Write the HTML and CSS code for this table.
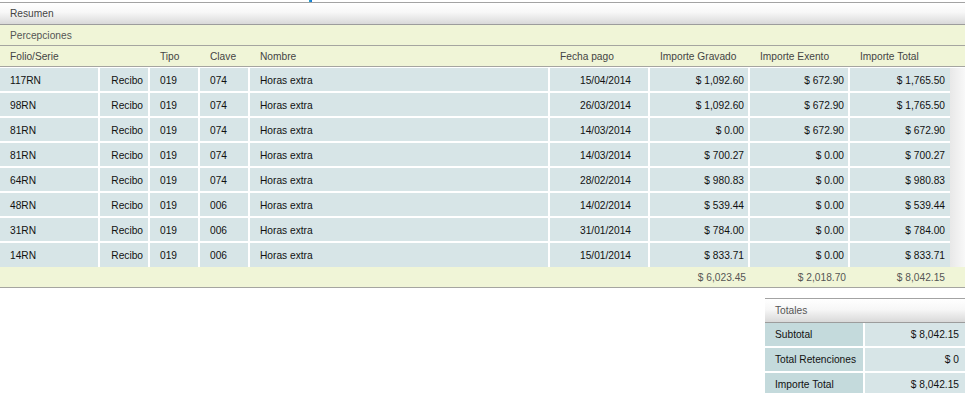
FILE: index.html
```html
<!DOCTYPE html>
<html lang="es">
<head>
<meta charset="utf-8">
<title>Resumen</title>
<link rel="stylesheet" href="styles.css">
</head>
<body>
<div class="topbar"><span class="mark"></span></div>
<div class="panel">
  <div class="panel-head">Resumen</div>
  <div class="section-head">Percepciones</div>
  <table class="grid">
    <colgroup>
      <col class="w100"><col class="w50"><col class="w50"><col class="w50"><col class="w300">
      <col class="w100"><col class="w100"><col class="w100"><col class="w100"><col class="w15">
    </colgroup>
    <thead>
      <tr>
        <th>Folio/Serie</th><th></th><th>Tipo</th><th>Clave</th><th>Nombre</th>
        <th>Fecha pago</th><th>Importe Gravado</th><th>Importe Exento</th><th>Importe Total</th><th></th>
      </tr>
    </thead>
    <tbody>
      <tr><td class="l">117RN</td><td class="rc">Recibo</td><td class="l">019</td><td class="l">074</td><td class="l">Horas extra</td><td class="d">15/04/2014</td><td class="m">$ 1,092.60</td><td class="m">$ 672.90</td><td class="t">$ 1,765.50</td><td class="gutter"></td></tr>
      <tr><td class="l">98RN</td><td class="rc">Recibo</td><td class="l">019</td><td class="l">074</td><td class="l">Horas extra</td><td class="d">26/03/2014</td><td class="m">$ 1,092.60</td><td class="m">$ 672.90</td><td class="t">$ 1,765.50</td><td class="gutter"></td></tr>
      <tr><td class="l">81RN</td><td class="rc">Recibo</td><td class="l">019</td><td class="l">074</td><td class="l">Horas extra</td><td class="d">14/03/2014</td><td class="m">$ 0.00</td><td class="m">$ 672.90</td><td class="t">$ 672.90</td><td class="gutter"></td></tr>
      <tr><td class="l">81RN</td><td class="rc">Recibo</td><td class="l">019</td><td class="l">074</td><td class="l">Horas extra</td><td class="d">14/03/2014</td><td class="m">$ 700.27</td><td class="m">$ 0.00</td><td class="t">$ 700.27</td><td class="gutter"></td></tr>
      <tr><td class="l">64RN</td><td class="rc">Recibo</td><td class="l">019</td><td class="l">074</td><td class="l">Horas extra</td><td class="d">28/02/2014</td><td class="m">$ 980.83</td><td class="m">$ 0.00</td><td class="t">$ 980.83</td><td class="gutter"></td></tr>
      <tr><td class="l">48RN</td><td class="rc">Recibo</td><td class="l">019</td><td class="l">006</td><td class="l">Horas extra</td><td class="d">14/02/2014</td><td class="m">$ 539.44</td><td class="m">$ 0.00</td><td class="t">$ 539.44</td><td class="gutter"></td></tr>
      <tr><td class="l">31RN</td><td class="rc">Recibo</td><td class="l">019</td><td class="l">006</td><td class="l">Horas extra</td><td class="d">31/01/2014</td><td class="m">$ 784.00</td><td class="m">$ 0.00</td><td class="t">$ 784.00</td><td class="gutter"></td></tr>
      <tr><td class="l">14RN</td><td class="rc">Recibo</td><td class="l">019</td><td class="l">006</td><td class="l">Horas extra</td><td class="d">15/01/2014</td><td class="m">$ 833.71</td><td class="m">$ 0.00</td><td class="t">$ 833.71</td><td class="gutter"></td></tr>
    </tbody>
    <tfoot>
      <tr><td colspan="6"></td><td class="m">$ 6,023.45</td><td class="m">$ 2,018.70</td><td class="t">$ 8,042.15</td><td></td></tr>
    </tfoot>
  </table>
</div>
<div class="totals-wrap">
  <div class="totals">
    <div class="totals-head">Totales</div>
    <table class="totals-table">
      <colgroup><col class="w100"><col class="w100"></colgroup>
      <tbody>
        <tr><td class="lab">Subtotal</td><td class="val">$ 8,042.15</td></tr>
        <tr><td class="lab">Total Retenciones</td><td class="val">$ 0</td></tr>
        <tr><td class="lab">Importe Total</td><td class="val">$ 8,042.15</td></tr>
      </tbody>
    </table>
  </div>
</div>
</body>
</html>
```
FILE: styles.css
```css
html, body {
  margin: 0;
  padding: 0;
  background: #ffffff;
}
body {
  font-family: "Liberation Sans", Arial, sans-serif;
  font-size: 10.2px;
  color: #1a1a1a;
  width: 969px;
}
.topbar {
  height: 2px;
  display: flex;
}
.mark {
  display: block;
  width: 3px;
  height: 2px;
  margin-left: 309px;
  background: linear-gradient(to right, #2aa6c8, #1473d6);
}
.panel {
  width: 965px;
}
.panel-head {
  border-top: 1px solid #a3a3a3;
  border-bottom: 1px solid #9c9c9c;
  height: 21px;
  line-height: 21px;
  padding-left: 10px;
  color: #444;
  background: linear-gradient(to bottom, #ffffff 0%, #f7f7f7 45%, #d9d9d9 100%);
}
.section-head {
  height: 19px;
  line-height: 19px;
  padding-top: 1px;
  padding-left: 10px;
  color: #555;
  background: #f0f5d7;
  border-bottom: 1px solid #a5a5a0;
}
.grid {
  width: 965px;
  table-layout: fixed;
  border-collapse: separate;
  border-spacing: 0;
}
.w100 { width: 100px; }
.w50 { width: 50px; }
.w300 { width: 300px; }
.w15 { width: 15px; }
.grid th {
  font-weight: normal;
  text-align: left;
  color: #444;
  background: #f0f5d7;
  line-height: 19px;
  padding: 1px 0 0 10px;
  border-bottom: 1px solid #a5a5a0;
  white-space: nowrap;
}
.grid tbody td {
  background: #d7e5e7;
  line-height: 21px;
  padding: 2px 0 0 0;
  border-right: 2px solid #ffffff;
  border-bottom: 2px solid #ffffff;
  white-space: nowrap;
  color: #111;
}
.grid tbody tr:first-child td {
  border-top: 1px solid #ffffff;
}
.grid tbody tr:last-child td {
  border-bottom: 0;
  line-height: 22px;
}
.grid tbody td.l { padding-left: 10px; }
.grid tbody td.rc { text-align: right; padding-right: 5px; }
.grid tbody td.d { text-align: right; padding-right: 17px; }
.grid tbody td.m { text-align: right; padding-right: 4px; }
.grid tbody td.t { text-align: right; padding-right: 5px; border-right: 0; }
.grid tbody td.gutter {
  border: 0;
  background: linear-gradient(to right, #e8e8e8, #f8f8f8);
}
.grid tfoot td {
  background: #f0f5d7;
  line-height: 18px;
  padding: 2px 0 0 0;
  color: #555;
  border-bottom: 1px solid #a5a5a0;
  white-space: nowrap;
}
.grid tfoot td.m { text-align: right; padding-right: 4px; }
.grid tfoot td.t { text-align: right; padding-right: 5px; }
.totals-wrap {
  width: 965px;
  display: flex;
  justify-content: flex-end;
  margin-top: 10px;
}
.totals {
  width: 200px;
}
.totals-head {
  border-top: 1px solid #a3a3a3;
  border-bottom: 1px solid #9c9c9c;
  height: 23px;
  line-height: 23px;
  padding-left: 10px;
  color: #555;
  background: linear-gradient(to bottom, #ffffff 0%, #f7f7f7 45%, #d9d9d9 100%);
}
.totals-table {
  width: 200px;
  table-layout: fixed;
  border-collapse: separate;
  border-spacing: 0;
}
.totals-table td {
  line-height: 22px;
  padding: 1px 0 0 0;
  border-bottom: 2px solid #ffffff;
  white-space: nowrap;
  color: #111;
}
.totals-table td.lab {
  background: #c4dadc;
  padding-left: 10px;
  border-right: 2px solid #ffffff;
}
.totals-table td.val {
  background: #d7e5e7;
  text-align: right;
  padding-right: 6px;
}
```
